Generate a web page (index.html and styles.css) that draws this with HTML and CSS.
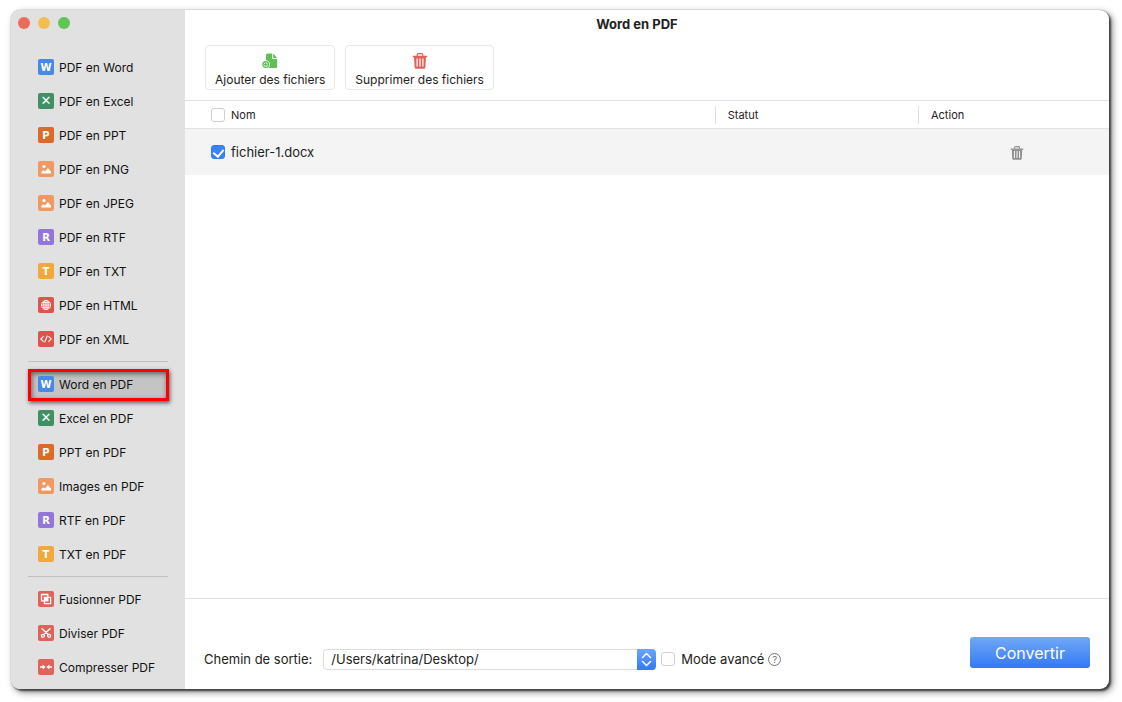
FILE: index.html
```html
<!DOCTYPE html>
<html lang="fr">
<head>
    <meta charset="UTF-8">
    <meta name="viewport" content="width=device-width, initial-scale=1.0">
    <title>Word en PDF</title>
    <link rel="stylesheet" href="styles.css">
</head>
<body>

    <svg class="sprite" aria-hidden="true">
        <symbol id="picture" viewBox="0 0 16 16">
            <circle cx="6" cy="5.6" r="1.6" fill="#fff"/>
            <path d="M3.4 12.4v-1.6l2.2-1.6 1.6 1.2L9.8 7l3.2 3.6v1.8z" fill="#fff"/>
        </symbol>
        <symbol id="globe" viewBox="0 0 16 16">
            <g fill="none" stroke="#fff" stroke-width="0.9">
                <circle cx="8" cy="8" r="4.6"/>
                <ellipse cx="8" cy="8" rx="2.2" ry="4.6"/>
                <path d="M3.4 8h9.2M8 3.4v9.2M4.2 5.7h7.6M4.2 10.3h7.6"/>
            </g>
        </symbol>
        <symbol id="code" viewBox="0 0 16 16">
            <path d="M5.2 5.6L2.8 8l2.4 2.4M10.8 5.6L13.2 8l-2.4 2.4M9.2 5L6.8 11" fill="none" stroke="#fff" stroke-width="1.1" stroke-linecap="round"/>
        </symbol>
        <symbol id="merge" viewBox="0 0 16 16">
            <path d="M3.5 3.5h6.3v6.3H3.5zM6.4 6.4h6.2v6.2H6.4z" fill="none" stroke="#fff" stroke-width="1.3"/>
            <path d="M6.4 6.4h3.4v3.4H6.4z" fill="#fff"/>
        </symbol>
        <symbol id="cut" viewBox="0 0 16 16">
            <g fill="none" stroke="#fff" stroke-width="1.3" stroke-linecap="round">
                <path d="M4 3.8l6.3 5.6M12 3.8L5.7 9.4"/>
                <circle cx="4.9" cy="10.8" r="1.5"/>
                <circle cx="11.1" cy="10.8" r="1.5"/>
            </g>
        </symbol>
        <symbol id="compress" viewBox="0 0 16 16">
            <path d="M2 8h4M10 8h4" stroke="#fff" stroke-width="1.3"/>
            <path d="M4.6 5.6L7.6 8l-3 2.4zM11.4 5.6L8.4 8l3 2.4z" fill="#fff"/>
        </symbol>
        <symbol id="trash" viewBox="0 0 16 16">
            <path d="M5.2 3V1.8Q5.2.7 6.3.7h3.4q1.1 0 1.1 1.1V3" fill="none" stroke="currentColor" stroke-width="1.2"/>
            <path d="M.8 2.8h14.4v1.4H.8z" fill="currentColor"/>
            <path fill-rule="evenodd" d="M2 4h12l-.6 10.6q-.1 1.2-1.3 1.2H3.9q-1.2 0-1.3-1.2zM4.5 5.6v8h1.2v-8zM7.4 5.6v8h1.2v-8zM10.3 5.6v8h1.2v-8z" fill="currentColor"/>
        </symbol>
    </svg>

    <div class="window">
        <aside class="sidebar">
            <div class="lights">
                <button class="light red" aria-label="Fermer"></button>
                <button class="light yellow" aria-label="Réduire"></button>
                <button class="light green" aria-label="Agrandir"></button>
            </div>
            <nav>
                <a class="item" href="#"><span class="icon letter word">W</span>PDF en Word</a>
                <a class="item" href="#"><span class="icon excel">✕</span>PDF en Excel</a>
                <a class="item" href="#"><span class="icon letter ppt">P</span>PDF en PPT</a>
                <a class="item" href="#"><span class="icon image"><svg><use href="#picture"/></svg></span>PDF en PNG</a>
                <a class="item" href="#"><span class="icon image"><svg><use href="#picture"/></svg></span>PDF en JPEG</a>
                <a class="item" href="#"><span class="icon letter rtf">R</span>PDF en RTF</a>
                <a class="item" href="#"><span class="icon letter txt">T</span>PDF en TXT</a>
                <a class="item" href="#"><span class="icon web"><svg><use href="#globe"/></svg></span>PDF en HTML</a>
                <a class="item" href="#"><span class="icon web"><svg><use href="#code"/></svg></span>PDF en XML</a>
                <hr>
                <a class="item active" href="#"><span class="icon letter word">W</span>Word en PDF</a>
                <a class="item" href="#"><span class="icon excel">✕</span>Excel en PDF</a>
                <a class="item" href="#"><span class="icon letter ppt">P</span>PPT en PDF</a>
                <a class="item" href="#"><span class="icon image"><svg><use href="#picture"/></svg></span>Images en PDF</a>
                <a class="item" href="#"><span class="icon letter rtf">R</span>RTF en PDF</a>
                <a class="item" href="#"><span class="icon letter txt">T</span>TXT en PDF</a>
                <hr>
                <a class="item" href="#"><span class="icon tool"><svg><use href="#merge"/></svg></span>Fusionner PDF</a>
                <a class="item" href="#"><span class="icon tool"><svg><use href="#cut"/></svg></span>Diviser PDF</a>
                <a class="item" href="#"><span class="icon tool"><svg><use href="#compress"/></svg></span>Compresser PDF</a>
            </nav>
        </aside>

        <main class="main">
            <h1>Word en PDF</h1>

            <div class="toolbar">
                <button class="tool-btn">
                    <svg class="add-icon" viewBox="0 0 18 18">
                        <path d="M6.5.5h5v6.2H17v8.7q0 1.6-1.6 1.6H4.5V2.5q0-2 2-2z" fill="#5ebf55"/>
                        <path d="M12.6.6L17 5.6h-4.4z" fill="#5ebf55"/>
                        <circle cx="4.2" cy="13" r="4.8" fill="#fff"/>
                        <circle cx="4.2" cy="13" r="3.2" fill="none" stroke="#5ebf55" stroke-width="1.5"/>
                        <path d="M4.2 11v4M2.2 13h4" stroke="#5ebf55" stroke-width="1.4"/>
                    </svg>
                    Ajouter des fichiers
                </button>
                <button class="tool-btn">
                    <svg class="remove-icon"><use href="#trash"/></svg>
                    Supprimer des fichiers
                </button>
            </div>

            <table class="files">
                <thead>
                    <tr>
                        <th class="name"><label><input type="checkbox">Nom</label></th>
                        <th class="status"><span>Statut</span></th>
                        <th class="action"><span>Action</span></th>
                    </tr>
                </thead>
                <tbody>
                    <tr>
                        <td><label><input type="checkbox" checked>fichier-1.docx</label></td>
                        <td></td>
                        <td class="action-cell"><button class="delete-btn" aria-label="Supprimer"><svg><use href="#trash"/></svg></button></td>
                    </tr>
                </tbody>
            </table>

            <div class="footer">
                <label for="output">Chemin de sortie:</label>
                <div class="path">
                    <select id="output">
                        <option>/Users/katrina/Desktop/</option>
                    </select>
                    <svg class="stepper" viewBox="0 0 19 21">
                        <path d="M5.5 8.5l4-4 4 4M5.5 12.5l4 4 4-4" fill="none" stroke="#fff" stroke-width="1.5" stroke-linecap="round" stroke-linejoin="round"/>
                    </svg>
                </div>
                <label class="advanced"><input type="checkbox">Mode avancé</label>
                <button class="help" aria-label="Aide">?</button>
                <button class="convert">Convertir</button>
            </div>
        </main>
    </div>

</body>
</html>
```
FILE: styles.css
```css
* {
    box-sizing: border-box;
}
body {
    margin: 0;
    padding: 10px 13px 13px 11px;
    height: 100vh;
    background: #fff;
    color: #222;
    font-family: Inter, "Liberation Sans", sans-serif;
    font-size: 13px;
}
button, select, input {
    font: inherit;
    color: inherit;
    margin: 0;
}
.sprite {
    display: none;
}
.window {
    display: flex;
    height: 100%;
    border-radius: 9px;
    overflow: hidden;
    background: #fff;
    box-shadow: 0 0 1px #555, 2px 2px 2px rgba(0, 0, 0, 0.6), 3px 3px 7px rgba(0, 0, 0, 0.5);
}

/* sidebar */
.sidebar {
    width: 174px;
    flex-shrink: 0;
    background: #e1e1e1;
}
.lights {
    display: flex;
    gap: 8px;
    padding: 7px 7px 21px;
}
.light {
    width: 12px;
    height: 12px;
    padding: 0;
    border: none;
    border-radius: 50%;
}
.red {
    background: #ed6a5e;
}
.yellow {
    background: #f4bd4f;
}
.green {
    background: #61c554;
}
.sidebar nav {
    display: flex;
    flex-direction: column;
    padding: 0 16px 0 17px;
}
.sidebar hr {
    width: 140px;
    height: 1px;
    margin: 5px 0;
    border: none;
    background: #c0c0c0;
}
.item {
    display: flex;
    align-items: center;
    gap: 5px;
    height: 34px;
    padding-left: 10px;
    font-size: 12px;
    color: #111;
    text-decoration: none;
    white-space: nowrap;
}
.item.active {
    height: 32px;
    margin-top: 2px;
    padding: 0 0 2px 7px;
    border: 3px solid #f00;
    background: #c4c4c4;
    box-shadow: 1px 2px 4px rgba(0, 0, 0, 0.6), inset 1px 2px 5px rgba(0, 0, 0, 0.5);
}
.icon {
    display: flex;
    align-items: center;
    justify-content: center;
    width: 16px;
    height: 16px;
    border-radius: 2px;
    color: #fff;
    font-family: "DejaVu Sans", sans-serif;
    font-size: 10px;
    font-weight: 700;
    line-height: 16px;
}
.icon svg {
    width: 16px;
    height: 16px;
}
.letter {
    padding-top: 2px;
}
.word {
    background: #4789e8;
}
.excel {
    background: #3f9163;
    font-size: 13px;
}
.ppt {
    background: #dc6b2a;
}
.image {
    background: #f19962;
}
.rtf {
    background: #9276dc;
}
.txt {
    background: #f2a93c;
}
.web {
    background: #e0524c;
}
.tool {
    background: #e0635a;
}

/* main area */
.main {
    display: flex;
    flex-direction: column;
    flex: 1;
    min-width: 0;
}
h1 {
    margin: 0;
    padding: 5px 20px 12px 0;
    font-size: 13px;
    line-height: 18px;
    text-align: center;
}
.toolbar {
    display: flex;
    gap: 10px;
    padding: 0 20px 10px;
}
.tool-btn {
    display: flex;
    flex-direction: column;
    align-items: center;
    gap: 3px;
    height: 45px;
    padding: 7px 9px 0;
    border: 1px solid #e6e6e6;
    border-radius: 4px;
    background: #fff;
    font-size: 12px;
    line-height: 16px;
}
.tool-btn svg {
    width: 16px;
    height: 16px;
    flex-shrink: 0;
}
.remove-icon {
    color: #e0635a;
}
.files {
    width: 100%;
    table-layout: fixed;
    border-collapse: collapse;
}
.files th, .files td {
    padding: 0;
    text-align: left;
}
.files th {
    height: 28px;
    border-top: 1px solid #e2e2e2;
    border-bottom: 1px solid #e2e2e2;
    font-size: 11px;
    font-weight: 400;
}
.files th span {
    display: block;
    padding-left: 12px;
    border-left: 1px solid #dedede;
    line-height: 18px;
}
.status {
    width: 22%;
}
.action {
    width: 191px;
}
.files td {
    height: 46px;
    background: #f4f4f4;
}
.files label {
    display: flex;
    align-items: center;
    gap: 6px;
    padding-left: 26px;
}
input[type="checkbox"] {
    appearance: none;
    width: 14px;
    height: 14px;
    border: 1px solid #cfcfcf;
    border-radius: 3px;
    background: #fff;
}
input[type="checkbox"]:checked {
    border-color: #3478f6;
    background: #3b82f7;
    display: flex;
    justify-content: center;
}
input[type="checkbox"]:checked::after {
    content: "";
    width: 5px;
    height: 8px;
    margin-top: 1px;
    border: solid #fff;
    border-width: 0 2px 2px 0;
    transform: rotate(40deg);
}
.files .action-cell {
    padding-left: 7px;
    text-align: center;
}
.delete-btn {
    padding: 0;
    border: none;
    background: none;
    color: #8e8e8e;
    vertical-align: middle;
}
.delete-btn svg {
    display: block;
    width: 14px;
    height: 14px;
}

/* footer */
.footer {
    display: flex;
    align-items: center;
    height: 91px;
    margin-top: auto;
    padding: 30px 19px 0;
    border-top: 1px solid #e2e2e2;
}
.path {
    display: flex;
    width: 333px;
    height: 21px;
    margin: 0 5px 0 11px;
    border-radius: 4px;
    overflow: hidden;
}
.path select {
    appearance: none;
    flex: 1;
    min-width: 0;
    padding: 0 7px;
    border: 1px solid #dcdcdc;
    border-right: none;
    border-radius: 4px 0 0 4px;
    background: #fff;
}
.stepper {
    width: 19px;
    height: 21px;
    background: linear-gradient(#6aa6f8, #3478f6);
    pointer-events: none;
}
.advanced {
    display: flex;
    align-items: center;
    gap: 6px;
}
.help {
    width: 13px;
    height: 13px;
    margin-left: 4px;
    padding: 0;
    border: 1px solid #777;
    border-radius: 50%;
    background: none;
    color: #666;
    font-size: 9px;
    line-height: 11px;
}
.convert {
    align-self: flex-start;
    width: 120px;
    height: 31px;
    margin-top: 8px;
    margin-left: auto;
    border: none;
    border-radius: 3px;
    background: linear-gradient(#70a9f6, #3478f6);
    color: #fff;
    font-size: 16px;
}
```
